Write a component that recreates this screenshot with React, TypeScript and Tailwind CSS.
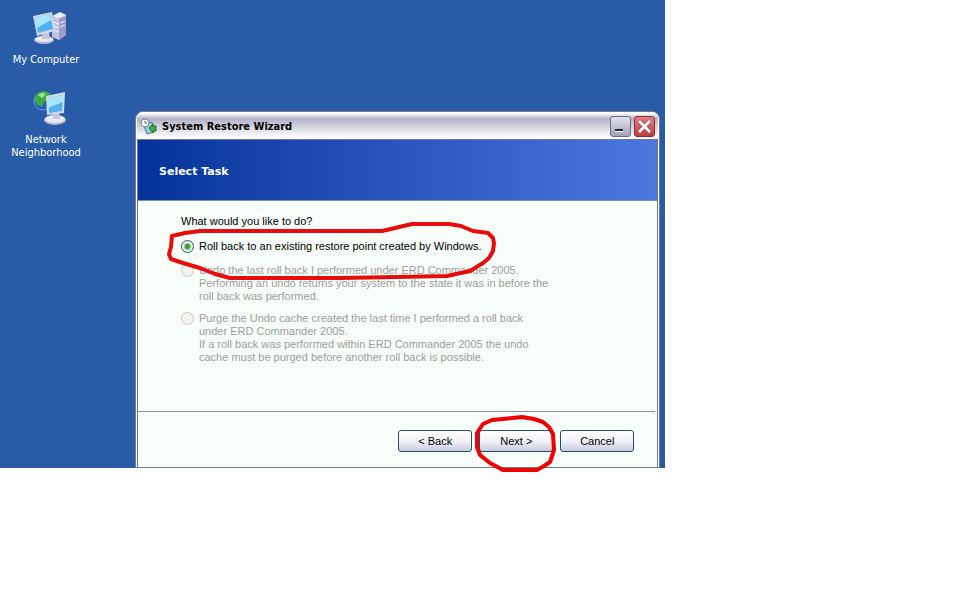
import React from "react";

const ComputerIcon = () => {
  return (
    <svg width="36" height="40" viewBox="0 0 36 40" aria-hidden="true">
      <path d="M21 8l8-4 6 2v20l-7 5-7-3z" fill="#c4c4de" />
      <path d="M28 10l7-3v19l-7 5z" fill="#9a9acb" />
      <path d="M21 7l8-4 6 3-7 3z" fill="#efeff8" />
      <path d="M22 13l6 2M22 17l6 2M22 21l6 2M29 14l5-2M29 18l5-2" stroke="#f2f2fa" />
      <ellipse cx="13" cy="31" rx="10" ry="4" fill="#b4b4cf" />
      <ellipse cx="13" cy="30" rx="9" ry="3" fill="#e9e9f3" />
      <path d="M11 23h7l1 7h-8z" fill="#c6c6dc" />
      <path d="M2 7l19-4 3 19-18 5z" fill="#d4d6ea" />
      <path d="M4 9l15-4 3 15-15 4z" fill="#4fb2ee" />
      <path d="M4 9l15-4 1 6-14 8z" fill="#a5e4fc" />
    </svg>
  );
};

const NetworkIcon = () => {
  return (
    <svg width="36" height="40" viewBox="0 0 36 40" aria-hidden="true">
      <circle cx="12" cy="12" r="9" fill="#2457c4" stroke="#6f9be0" />
      <path d="M5 6c5-6 12-4 15 0l-4 6-3 1-2 5-5-2c-2-3-3-7-1-10z" fill="#3cab44" />
      <path d="M7 6c3-3 6-2 8-1l-4 4z" fill="#9be28c" />
      <ellipse cx="24" cy="31" rx="11" ry="5" fill="#b4b4cf" />
      <ellipse cx="24" cy="30" rx="10" ry="4" fill="#e9e9f3" />
      <path d="M21 23h7l1 7h-7z" fill="#c6c6dc" />
      <path d="M15 7l19-4-1 21-17 2z" fill="#d4d6ea" />
      <path d="M17 9l15-3-1 16-13 2z" fill="#4fb2ee" />
      <path d="M17 9l15-3v7l-15 6z" fill="#a5e4fc" />
    </svg>
  );
};

const RestoreIcon = () => {
  return (
    <svg width="17" height="17" viewBox="0 0 17 17" aria-hidden="true">
      <path d="M4 8l8-4 2 10-7 2z" fill="#8ed3e6" stroke="#4a7088" />
      <circle cx="5" cy="5" r="4" fill="#fbfbfb" stroke="#7c8088" />
      <path d="M5 3v2h2" stroke="#555" fill="none" />
      <path d="M9 10l4-4v2h3v5h-3v2z" fill="#3fae3f" stroke="#216b2a" />
    </svg>
  );
};

// red pen around the first choice
const OptionMark = () => {
  return (
    <svg width="335" height="62" viewBox="0 0 335 62" className="pointer-events-none absolute -top-5 -left-4 z-10" aria-hidden="true">
      <path
        d="M7 16L20 13L35 11H217L230 8L247 4H284L296 6L308 11L323 13L328 18L329 23L328 31L324 38L318 43L305 51L282 56L232 57L175 58H65L50 54L35 48L18 43L6 39L4 34L6 27Z"
        fill="none"
        stroke="#e80c0c"
        strokeWidth="4"
        strokeLinejoin="round"
      />
    </svg>
  );
};

const ButtonMark = () => {
  return (
    <svg width="86" height="60" viewBox="0 0 86 60" className="pointer-events-none absolute -top-4 -left-2 z-10" aria-hidden="true">
      <path
        d="M12 10L21 6L32 5L51 3L63 5L72 8L78 13L82 20L83 36L79 48L73 52L66 56H32L19 49L9 41L6 33V19Z"
        fill="none"
        stroke="#f00000"
        strokeWidth="4"
        strokeLinejoin="round"
      />
    </svg>
  );
};

const options = [
  {
    id: "rollback",
    lines: ["Roll back to an existing restore point created by Windows."],
  },
  {
    id: "undo",
    disabled: true,
    lines: [
      "Undo the last roll back I performed under ERD Commander 2005.",
      "Performing an undo returns your system to the state it was in before the",
      "roll back was performed.",
    ],
  },
  {
    id: "purge",
    disabled: true,
    lines: [
      "Purge the Undo cache created the last time I performed a roll back",
      "under ERD Commander 2005.",
      "If a roll back was performed within ERD Commander 2005 the undo",
      "cache must be purged before another roll back is possible.",
    ],
  },
];

const buttonStyle =
  "h-[22px] w-[74px] rounded-[3px] border border-[#2b4a72] bg-linear-to-b from-white via-[#f2f2f7] to-[#c9cade]";

const App = () => {
  return (
    <div className="min-h-screen bg-white">
      <main className="grid w-[69.3%] grid-cols-[135px_1fr] bg-[#295ca6] pr-[5px]">
        <nav className="flex flex-col gap-[23px] pt-[9px] pr-[43px] text-center font-['DejaVu_Sans_Condensed','DejaVu_Sans',sans-serif] text-[11px] leading-[13px] text-white">
          <a href="#computer" className="flex flex-col items-center gap-1">
            <span className="pl-1.5">
              <ComputerIcon />
            </span>
            My Computer
          </a>
          <a href="#network" className="flex flex-col items-center gap-1">
            <span className="pl-1.5">
              <NetworkIcon />
            </span>
            <span>
              Network
              <br />
              Neighborhood
            </span>
          </a>
        </nav>

        <section className="mt-[111px] flex flex-col rounded-t-lg border border-[#77778a] bg-[#fafafc] px-px font-['Liberation_Sans',Arial,sans-serif] text-[11px] leading-[13px] text-black">
          <header className="flex h-[27px] items-center gap-[3px] rounded-t-md bg-linear-to-b from-white from-5% via-[#b3b3c6] via-25% to-[#fafafc] to-90% pt-0.5 pr-[3px] pl-[3px]">
            <RestoreIcon />
            <h1 className="grow pl-0.5 font-['DejaVu_Sans_Condensed','DejaVu_Sans',sans-serif] text-[11px] font-bold">
              System Restore Wizard
            </h1>
            <button
              aria-label="Minimize"
              className="flex size-[21px] items-end rounded-[3px] border border-[#6c6c88] bg-linear-to-b from-[#e4e4ee] to-[#a0a2ba] p-1"
            >
              <span className="h-[3px] w-2 border-b border-white bg-[#1c2b33]" />
            </button>
            <button
              aria-label="Close"
              className="flex size-[21px] items-center justify-center rounded-[3px] border border-[#8b2a34] bg-linear-to-b from-[#dc8080] to-[#bd4040]"
            >
              <svg width="13" height="13" viewBox="0 0 13 13">
                <path d="M1 1l11 11M12 1L1 12" stroke="#8a2a2a" strokeWidth="4" />
                <path d="M1 1l11 11M12 1L1 12" stroke="#fff" strokeWidth="3" />
              </svg>
            </button>
          </header>

          <div className="border-x border-t border-[#77778a]">
            <div className="flex h-[61px] items-center border-b border-[#7a8cc8] bg-linear-to-r from-[#03339a] to-[#4a78de] px-[21px] pt-0.5">
              <h2 className="font-['DejaVu_Sans',sans-serif] text-[11px] font-bold text-white">
                Select Task
              </h2>
            </div>

            <form className="bg-[#f7fdf9]">
              <fieldset className="mr-0.5 h-[211px] border-b border-[#8c9292] px-[43px]">
                <legend className="pt-[14px] pb-3">
                  What would you like to do?
                </legend>
                <div className="flex flex-col gap-[9px]">
                  {options.map((option) => (
                    <label key={option.id} className="relative flex min-h-[15px] gap-[5px]">
                      <input
                        type="radio"
                        name="task"
                        disabled={option.disabled}
                        defaultChecked={!option.disabled}
                        className="peer size-[13px] shrink-0 appearance-none rounded-full border border-[#2f5a7a] bg-[radial-gradient(circle,#35a035_2px,#e8efe4_4px)] disabled:border-[#c8c8be] disabled:bg-[#f2f2ee] disabled:bg-none"
                      />
                      <span className="whitespace-nowrap peer-disabled:text-[#9c9f9c]">
                        {option.lines.map((line) => (
                          <span key={line} className="block">
                            {line}
                          </span>
                        ))}
                      </span>
                      {option.id === "rollback" && <OptionMark />}
                    </label>
                  ))}
                </div>
              </fieldset>
              <div className="flex justify-end gap-[7px] pt-[18px] pr-[23px] pb-[15px]">
                <button type="button" className={buttonStyle}>
                  &lt; Back
                </button>
                <div className="relative">
                  <button type="button" className={buttonStyle}>
                    Next &gt;
                  </button>
                  <ButtonMark />
                </div>
                <button type="button" className={buttonStyle}>
                  Cancel
                </button>
              </div>
            </form>
          </div>
        </section>
      </main>
    </div>
  );
};

export default App;
